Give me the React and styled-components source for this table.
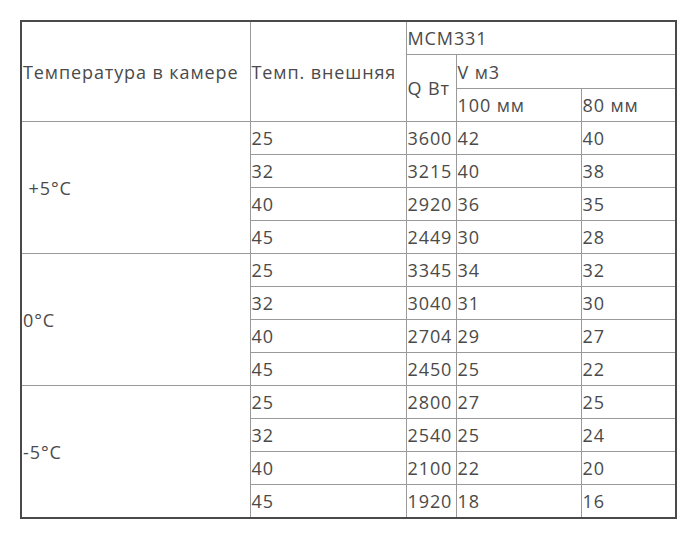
import { createGlobalStyle } from "styled-components"
import styled from "styled-components"

const GlobalStyle = createGlobalStyle`
	body {
		margin: 0;
		background: #fff;
	}
`

const Page = styled.div`
	padding: 20px 0 0 20px;
`

const Table = styled.table`
	border-collapse: collapse;
	border: 2px solid #4a4a4a;
	font-family: "Open Sans", "Noto Sans", sans-serif;
	font-size: 18px;
	letter-spacing: 0.9px;
	color: #4a4a4a;
	table-layout: fixed;
	width: 655px;
`

const Cell = styled.td`
	border: 1px solid #9a9a9a;
	padding: 0 1px;
	height: ${p => p.h || 32}px;
	vertical-align: middle;
	white-space: nowrap;
	overflow: hidden;
	line-height: 22px;
`

const cols = [229, 156, 50, 125, 95]

const groups = [
	{ label: "\u00a0+5°C", rows: [["25", "3600", "42", "40"], ["32", "3215", "40", "38"], ["40", "2920", "36", "35"], ["45", "2449", "30", "28"]] },
	{ label: "0°C", rows: [["25", "3345", "34", "32"], ["32", "3040", "31", "30"], ["40", "2704", "29", "27"], ["45", "2450", "25", "22"]] },
	{ label: "-5°C", rows: [["25", "2800", "27", "25"], ["32", "2540", "25", "24"], ["40", "2100", "22", "20"], ["45", "1920", "18", "16"]] },
]

export default function App() {
	return (
		<Page>
			<GlobalStyle />
			<Table>
				<colgroup>
					{cols.map((w, i) => <col key={i} style={{ width: w }} />)}
				</colgroup>
				<tbody>
					<tr>
						<Cell rowSpan={3}>Температура в камере</Cell>
						<Cell rowSpan={3}>Темп. внешняя</Cell>
						<Cell colSpan={3} h={32}>MCM331</Cell>
					</tr>
					<tr>
						<Cell rowSpan={2}>Q Вт</Cell>
						<Cell colSpan={2} h={33}>V м3</Cell>
					</tr>
					<tr>
						<Cell h={32}>100 мм</Cell>
						<Cell>80 мм</Cell>
					</tr>
					{groups.map(g => g.rows.map((r, i) => (
						<tr key={g.label + i}>
							{i === 0 && <Cell rowSpan={4}>{g.label}</Cell>}
							{r.map((v, j) => <Cell key={j}>{v}</Cell>)}
						</tr>
					)))}
				</tbody>
			</Table>
		</Page>
	)
}
